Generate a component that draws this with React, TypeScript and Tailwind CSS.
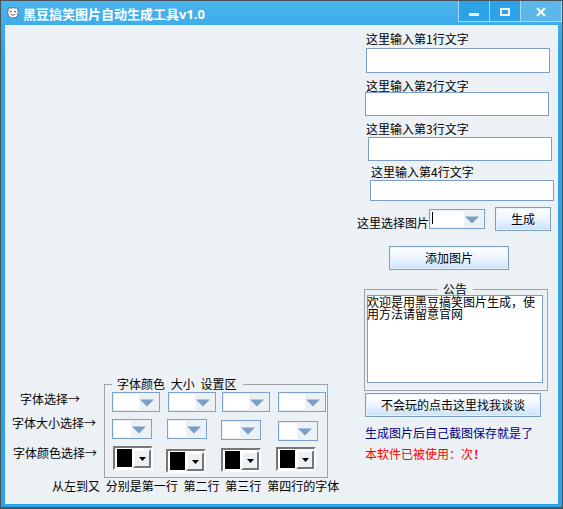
import type { ReactNode } from "react"
import clsx from "clsx"

const fontRow = ["", "ml-2", "ml-1.5", "ml-2"]
const sizeRow = ["", "ml-[15px]", "ml-[14px] mt-px", "ml-[17px] mt-0.5"]
const colorRow = ["", "ml-[14px] mt-[3px]", "ml-4 mt-0.5", "ml-4 mt-px"]

function Label({ children, className }: { children: ReactNode; className?: string }) {
  return (
    <div className={clsx("h-3.5 leading-[14px] whitespace-pre [word-spacing:3.1px]", className)}>
      {children}
    </div>
  )
}

function Combo({ className, caret }: { className?: string; caret?: boolean }) {
  return (
    <div
      className={clsx(
        "h-5 shrink-0 border border-[#7ba2ce] p-px flex items-center justify-between",
        className
      )}
    >
      <div className="h-full grow bg-white">
        {caret && <div className="w-px h-3 ml-px mt-px bg-black" />}
      </div>
      <svg width="14" height="8" viewBox="0 0 14 8" className="ml-px mr-1 mt-0.5">
        <path d="M0 0.5H14L7 7.5Z" fill="#7a9ec4" />
      </svg>
    </div>
  )
}

function ColorPicker({ className }: { className?: string }) {
  return (
    <div
      className={clsx(
        "w-10 h-6 -mr-px -mb-px shrink-0 flex border-2 border-t-[#777] border-l-[#777] border-r-white border-b-white bg-white pt-px pl-0.5",
        className
      )}
    >
      <div className="w-[15px] h-[18px] bg-black" />
      <div className="w-[18px] h-[19px] ml-px border-2 border-t-white border-l-white border-r-[#777] border-b-[#777] bg-[#ecf1f5] flex items-center justify-center">
        <svg width="7" height="4" viewBox="0 0 7 4">
          <path d="M0 0H7L3.5 4Z" fill="#000" />
        </svg>
      </div>
    </div>
  )
}

function Button({ children, className }: { children: ReactNode; className?: string }) {
  return (
    <button
      className={clsx(
        "block h-6 shrink-0 border border-[#7b9ebd] bg-linear-to-b from-white via-[#edf5fe] to-[#c9e1fb] shadow-[inset_0_0_0_1px_#e6f2ff] leading-[22px] text-center",
        className
      )}
    >
      {children}
    </button>
  )
}

function TextInput({ className }: { className?: string }) {
  return <input className={clsx("block w-[184px] shrink-0 border border-[#7b9fc9] bg-white outline-none", className)} />
}

function TitleBar() {
  return (
    <div className="h-6 shrink-0 flex items-start">
      <svg width="12" height="12" viewBox="0 0 13 13" className="ml-0.5 mt-1.5">
        <path
          d="M2 1.3Q3.2 0.4 4.2 1.3Q6.5 0.5 8.8 1.3Q9.8 0.4 11 1.3Q12 2.2 11.6 3.5Q13 6.5 11.5 9.2Q9.8 11.9 6.5 11.9Q3.2 11.9 1.5 9.2Q0 6.5 1.4 3.5Q1 2.2 2 1.3Z"
          fill="#fff"
          stroke="#444"
          strokeWidth="0.7"
        />
        <circle cx="4.3" cy="5" r="0.9" fill="#222" />
        <circle cx="8.7" cy="5" r="0.9" fill="#222" />
        <circle cx="2.8" cy="7.4" r="1.1" fill="#f3b5d5" />
        <circle cx="10.2" cy="7.4" r="1.1" fill="#f3b5d5" />
        <path d="M4.5 8Q6.5 10 8.5 8" fill="none" stroke="#222" strokeWidth="0.8" />
      </svg>
      <div className="ml-1 mt-[5px] flex text-[13px] leading-4 font-bold text-white font-['Open_Sans','Noto_Sans_CJK_SC',sans-serif]">
        黑豆搞笑图片自动生成工具v1.0
      </div>
      <div className="ml-auto -mr-1 h-[21px] w-[104px] flex border border-t-0 border-[#a5d8f7]">
        <div className="w-[31px] border-r border-[#a5d8f7] bg-[#2ba3e6]">
          <div className="w-2.5 h-[3px] ml-2.5 mt-3 bg-[#f0eeec]" />
        </div>
        <div className="w-[31px] border-r border-[#a5d8f7] bg-[#2ba3e6]">
          <div className="w-2.5 h-2 ml-2.5 mt-[7px] border-2 border-[#f0eeec]" />
        </div>
        <div className="grow bg-[#5bb7ea]">
          <svg width="10" height="10" viewBox="0 0 10 10" className="ml-[15px] mt-1.5">
            <path d="M1 1L9 9M9 1L1 9" stroke="#f5f2ef" strokeWidth="2.4" />
          </svg>
        </div>
      </div>
    </div>
  )
}

export default function App() {
  return (
    <div className="w-[563px] h-[509px] overflow-hidden flex flex-col border border-[#4b5158] border-b-2 text-xs text-black font-['Noto_Sans_CJK_SC',sans-serif] bg-[#2ea4e8]">
      <div className="grow flex flex-col px-1 pb-[3px] bg-linear-to-b from-[#4ab4ec] via-[#2ea4e8] via-10% to-[#2ea4e8]">
        <TitleBar />
        <div className="grow flex bg-[#ecf1f5]">
          {/* Left side - font settings */}
          <div className="w-[352px] shrink-0">
            <div className="mt-[359px] flex">
              <div className="w-[99px] shrink-0 pt-2">
                <Label className="ml-[15px]">字体选择→</Label>
                <Label className="ml-[7px] mt-2.5">字体大小选择→</Label>
                <Label className="ml-2 mt-4">字体颜色选择→</Label>
              </div>
              <div className="relative w-[224px] h-[94px] border border-[#9da3a8] pl-[7px] pt-[7px]">
                <div className="absolute left-[7px] -top-2 w-[131px] bg-[#ecf1f5] pl-[5px]">
                  <Label>字体颜色 大小 设置区</Label>
                </div>
                <div className="flex items-start">
                  {fontRow.map((gap, i) => (
                    <Combo key={i} className={clsx("w-12", gap)} />
                  ))}
                </div>
                <div className="flex items-start mt-[7px] h-[27px]">
                  {sizeRow.map((gap, i) => (
                    <Combo key={i} className={clsx("w-10", gap)} />
                  ))}
                </div>
                <div className="flex items-start pl-px">
                  {colorRow.map((gap, i) => (
                    <ColorPicker key={i} className={gap} />
                  ))}
                </div>
              </div>
            </div>
            <Label className="ml-[47px] mt-px">从左到又 分别是第一行 第二行 第三行 第四行的字体</Label>
          </div>

          {/* Right side - text lines and actions */}
          <div className="grow flex flex-col">
            <Label className="ml-[9px] mt-[7px]">这里输入第1行文字</Label>
            <TextInput className="ml-[9px] mt-0.5 h-[25px]" />
            <Label className="ml-[9px] mt-1.5">这里输入第2行文字</Label>
            <TextInput className="ml-2 -mt-px h-6" />
            <Label className="ml-[9px] mt-1.5">这里输入第3行文字</Label>
            <TextInput className="ml-[11px] mt-px h-6" />
            <Label className="ml-3.5 mt-1">这里输入第4行文字</Label>
            <TextInput className="ml-[13px] mt-px h-[21px]" />
            <div className="flex items-start mt-1.5">
              <Label className="w-[72px] mt-[9px]">这里选择图片</Label>
              <Combo className="w-14 mt-0.5" caret />
              <Button className="w-14 ml-2.5">生成</Button>
            </div>
            <Button className="ml-8 mt-[15px] w-[120px]">添加图片</Button>
            <div className="relative ml-[7px] mt-[19px] w-[184px] h-[102px] shrink-0 border border-[#9da3a8] pl-0.5 pt-[5px]">
              <div className="absolute left-[73px] -top-2 w-[35px] bg-[#ecf1f5] pl-[5px]">
                <Label>公告</Label>
              </div>
              <div className="relative w-[176px] h-[88px] border border-[#7b9fc9] bg-white leading-3">
                <p className="-ml-px w-[171px] break-all">欢迎是用黑豆搞笑图片生成，使用方法请留意官网</p>
              </div>
            </div>
            <Button className="ml-2 mt-0.5 w-[176px]">不会玩的点击这里找我谈谈</Button>
            <Label className="ml-2 mt-[9px] text-[#00008b]">生成图片后自己截图保存就是了</Label>
            <Label className="ml-2 mt-[7px] text-[#ff0000]">
              本软件已被使用：次<span className="ml-px font-bold">!</span>
            </Label>
          </div>
        </div>
      </div>
    </div>
  )
}
